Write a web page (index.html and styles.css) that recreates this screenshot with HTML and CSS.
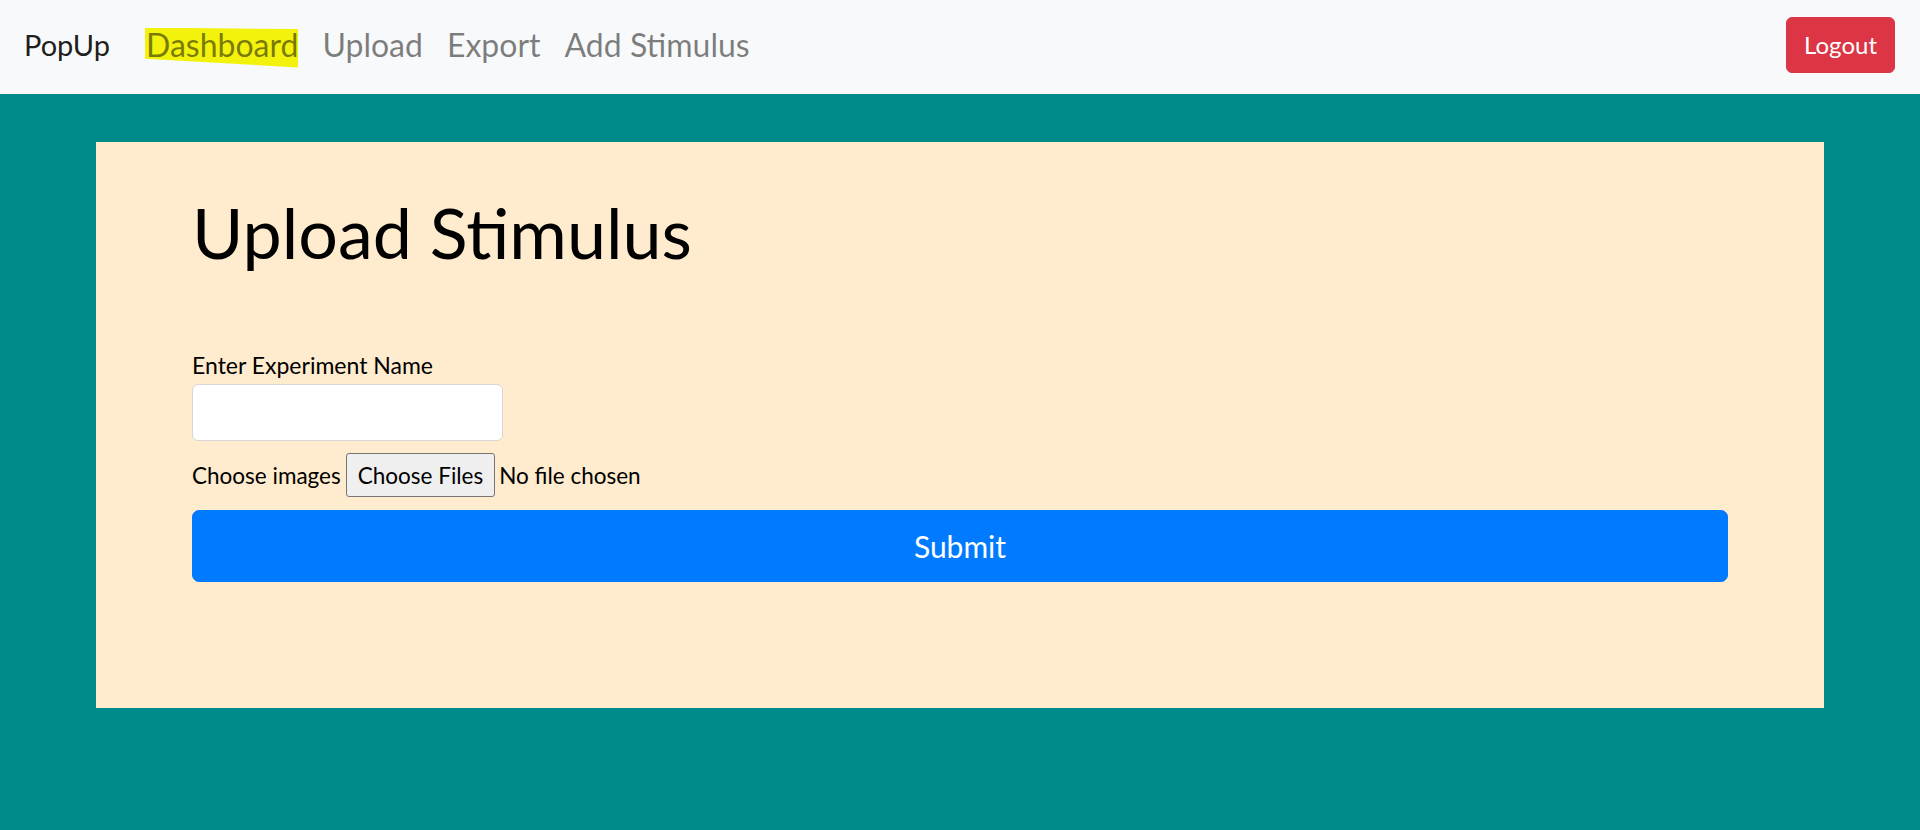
FILE: index.html
```html
<!DOCTYPE html>
<html lang="en">
<head>
<meta charset="utf-8">
<title>PopUp - Upload Stimulus</title>
<link rel="stylesheet" href="styles.css">
</head>
<body>
<nav class="navbar">
  <a class="brand" href="#">PopUp</a>
  <ul class="nav-links">
    <li><a class="nav-link highlighted" href="#">Dashboard</a></li>
    <li><a class="nav-link" href="#">Upload</a></li>
    <li><a class="nav-link" href="#">Export</a></li>
    <li><a class="nav-link" href="#">Add Stimulus</a></li>
  </ul>
  <button class="btn-logout" type="button">Logout</button>
</nav>
<main class="page">
  <section class="card">
    <h1 class="title">Upload Stimulus</h1>
    <form class="form">
      <label class="field-label" for="exp">Enter Experiment Name</label>
      <input class="text-input" id="exp" type="text">
      <div class="file-row">
        <span class="file-label">Choose images</span>
        <button class="file-btn" type="button">Choose Files</button>
        <span class="file-status">No file chosen</span>
      </div>
      <button class="btn-submit" type="button">Submit</button>
    </form>
  </section>
</main>
</body>
</html>
```

FILE: styles.css
```css
* { box-sizing: border-box; }
html, body { margin: 0; padding: 0; }
body {
  background: #008b8b;
  font-family: Lato, "Noto Sans", sans-serif;
  color: #000;
  height: 830px;
  overflow: hidden;
}
.navbar {
  height: 94px;
  background: #f8f9fa;
  display: flex;
  align-items: center;
  padding: 0 25px 4px 24px;
}
.brand {
  font-size: 29px;
  line-height: 45px;
  padding-bottom: 2px;
  color: rgba(0,0,0,.9);
  text-decoration: none;
  margin-right: 24px;
}
.nav-links {
  list-style: none;
  margin: 0;
  padding: 0 0 2px;
  display: flex;
  flex: 1;
}
.nav-link {
  display: block;
  position: relative;
  font-size: 32px;
  line-height: 45px;
  padding: 0 12px;
  color: rgba(0,0,0,.5);
  text-decoration: none;
  z-index: 0;
}
.nav-link.highlighted::before {
  content: "";
  position: absolute;
  left: 11px;
  right: 12px;
  top: 6px;
  bottom: -1px;
  background: #f2f20c;
  clip-path: polygon(0 0, 100% 4%, 100% 100%, 0 78%);
  z-index: -1;
}
.btn-logout {
  font-family: inherit;
  font-size: 24px;
  line-height: 36px;
  color: #fff;
  background: #dc3545;
  border: 1px solid #dc3545;
  border-radius: 6px;
  padding: 9px 17px;
  height: 56px;
}
.page {
  padding: 48px 96px;
}
.card {
  background: #ffebcd;
  padding: 47px 96px 126px;
}
.title {
  margin: 0 0 72px;
  font-size: 70px;
  line-height: 86px;
  font-weight: 400;
}
.form {
  display: flex;
  flex-direction: column;
  align-items: flex-start;
}
.field-label {
  font-size: 23px;
  line-height: 36px;
  height: 36px;
}
.text-input {
  margin-top: 1px;
  width: 311px;
  height: 57px;
  border: 1px solid #d6d6d6;
  border-radius: 6px;
  background: #fff;
}
.file-row {
  margin-top: 12px;
  height: 44px;
  display: flex;
  align-items: center;
  font-size: 22.5px;
}
.file-btn {
  font-family: inherit;
  font-size: 22.5px;
  height: 44px;
  margin: 0 4px 0 5px;
  padding: 0 11px;
  background: #efefef;
  border: 1px solid #767676;
  border-radius: 3px;
  color: #000;
}
.btn-submit {
  margin-top: 13px;
  width: 100%;
  height: 72px;
  font-family: inherit;
  font-size: 30px;
  color: #fff;
  background: #007bff;
  border: 1px solid #007bff;
  border-radius: 7px;
}
```
